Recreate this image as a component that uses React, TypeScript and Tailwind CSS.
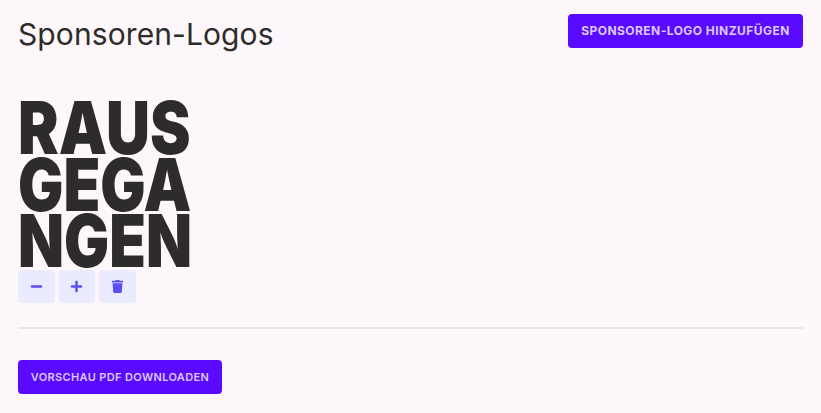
import { FaMinus, FaPlus, FaTrash } from "react-icons/fa";

const logoLines = [
  { text: "RAUS", cls: "scale-x-[0.835]" },
  { text: "GEGA", cls: "scale-x-[0.825]" },
  { text: "NGEN", cls: "scale-x-[0.82]" },
];

const iconBtn = "flex h-[33px] w-[36.7px] items-center justify-center rounded-[4px] bg-[#ebebff] text-[#5b4ff5]";

export default function App() {
  return (
    <div className="min-h-[413px] bg-[#fdf7fb] px-[18px] pt-[14px] font-['Inter',sans-serif] text-[#2d2c2a] overflow-hidden">
      <div className="flex items-start justify-between">
        <h1 className="text-[30px] leading-[41px] font-normal tracking-[0.1px]">Sponsoren-Logos</h1>
        <button className="h-[34px] w-[235px] rounded-[4px] bg-[#5a0bff] text-[12px] font-bold tracking-[0.45px] text-[#dcc8ff] uppercase">
          Sponsoren-Logo hinzufügen
        </button>
      </div>
      <div className="mt-[45px] flex h-[170px] w-[173px] flex-col">
        {logoLines.map((l) => (
          <div key={l.text} className={`h-[58.5px] origin-left text-[73px] leading-[56px] font-black whitespace-nowrap ${l.cls}`}>
            {l.text}
          </div>
        ))}
      </div>
      <div className="flex gap-[3.9px]">
        <button className={iconBtn}><FaMinus size={13} /></button>
        <button className={iconBtn}><FaPlus size={13} /></button>
        <button className={iconBtn}><FaTrash size={13} /></button>
      </div>
      <div className="mt-[24px] h-[2px] bg-[#e9e6e9]" />
      <button className="mt-[31px] h-[34px] w-[204px] rounded-[4px] bg-[#5a0bff] text-[11px] font-semibold tracking-[0.35px] text-[#dcc8ff] uppercase">
        Vorschau PDF downloaden
      </button>
    </div>
  );
}
